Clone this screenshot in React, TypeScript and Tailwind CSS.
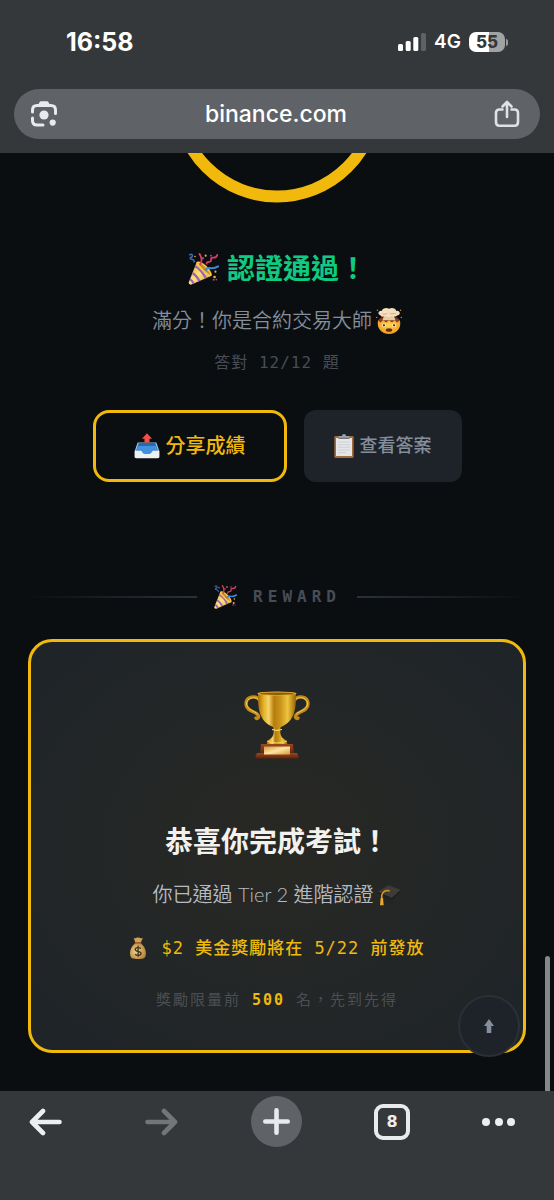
import type { ReactNode } from 'react';

type IconProps = { className?: string };

function PartyPopper({ className }: IconProps) {
  return (
    <svg viewBox="0 0 36 36" className={className} aria-hidden="true">
      <defs>
        <linearGradient id="cone" x1="0" y1="0" x2="1" y2="1">
          <stop offset="0" stopColor="#e0a72e" />
          <stop offset="0.5" stopColor="#ffe27a" />
          <stop offset="1" stopColor="#d99a20" />
        </linearGradient>
        <clipPath id="coneClip">
          <path d="M11 10 C17 11 25 19 27 26 L5 35.5 C3 36 1.500 34.500 2 33 Z" />
        </clipPath>
      </defs>
      <path d="M11 10 C17 11 25 19 27 26 L5 35.500 C3 36 1.500 34.500 2 33 Z" fill="url(#cone)" />
      <g clipPath="url(#coneClip)" stroke="#9a62b8" strokeWidth="2.600" fill="none">
        <path d="M8 14 C14 17 20 24 22 31" />
        <path d="M5 22 C9 24 13 29 15 34" />
        <path d="M2 29 C5 30 7 33 8 36" />
      </g>
      <path d="M11 10 C14 8 20 12 24 17 C28 22 29 26 27 26 C24 27 20 23 16 19 C12 15 10 12 11 10Z" fill="#f4c84e" />
      <path d="M13 11 C16 12 19 14 22 18 C24 20 26 23 26 24.500 C23 23 19 20 17 17 C15 15 13 12.500 13 11Z" fill="#c98a2c" />
      <path d="M15 13 C17 9 17 5 14 1" stroke="#e0395a" strokeWidth="2" fill="none" strokeLinecap="round" />
      <path d="M3 2 C7 0 7 5 4 5 C2 8 9 6 8 10" stroke="#4468bd" strokeWidth="1.700" fill="none" strokeLinecap="round" />
      <path d="M22 12 C22 8 28 12 27 7 C27 3 33 8 34 2" stroke="#d93b6b" strokeWidth="2" fill="none" strokeLinecap="round" />
      <path d="M21 19 C24 14 27 20 35 15" stroke="#3b86d8" strokeWidth="2.300" fill="none" strokeLinecap="round" />
      <g fill="#e8b32f">
        <circle cx="21" cy="3" r="1.200" />
        <circle cx="32" cy="21" r="1.200" />
        <circle cx="31" cy="27" r="1.500" />
        <circle cx="9" cy="4" r="0.900" />
      </g>
      <circle cx="18" cy="6" r="1.200" fill="#c83fa1" />
      <circle cx="30" cy="30" r="1.100" fill="#d83a5e" />
      <circle cx="33" cy="30" r="0.900" fill="#c83fa1" />
      <circle cx="27" cy="3" r="1" fill="#a557c2" />
    </svg>
  );
}

function ExplodingHead({ className }: IconProps) {
  return (
    <svg viewBox="0 0 36 36" className={className} aria-hidden="true">
      <defs>
        <radialGradient id="face" cx="0.500" cy="0.400" r="0.600">
          <stop offset="0" stopColor="#ffd84a" />
          <stop offset="1" stopColor="#f19a20" />
        </radialGradient>
      </defs>
      <path d="M3 17 C8 14 28 14 33 17 C36 28 28 36 18 36 C8 36 0 28 3 17Z" fill="url(#face)" />
      <path d="M3 17 L7 13 H29 L33 17 L29 20 L26 17 L22 20 L18 17 L14 20 L10 17 L6 20Z" fill="#8b3a1c" />
      <path d="M12 8 H24 L27 17 H9Z" fill="#e7c9a4" />
      <path d="M6 10 C1 8 4 3 8 4 C9 0 15 -1 18 1 C22 -1 27 0 28 4 C33 3 35 9 30 10 C27 13 23 11 21 11 C18 14 14 11 12 11 C10 13 7 12 6 10Z" fill="#f5dfbd" />
      <path d="M9 8 C12 10 14 7 16 8 M19 7 C22 10 25 6 28 8" stroke="#c99872" fill="none" />
      <circle cx="11" cy="24" r="2.600" fill="#fff4d8" />
      <circle cx="25" cy="24" r="2.600" fill="#fff4d8" />
      <circle cx="11" cy="24" r="1.600" fill="#4b2a17" />
      <circle cx="25" cy="24" r="1.600" fill="#4b2a17" />
      <ellipse cx="18" cy="30.500" rx="4.500" ry="2.500" fill="#642a18" />
      <g fill="#d48b2c">
        <circle cx="2" cy="3" r="1" />
        <circle cx="34" cy="3" r="1" />
        <circle cx="1" cy="13" r="1" />
        <circle cx="35" cy="13" r="1" />
      </g>
    </svg>
  );
}

function OutboxTray({ className }: IconProps) {
  return (
    <svg viewBox="0 0 36 36" className={className} aria-hidden="true">
      <path d="M5 13 H31 L35 25 V34 H1 V25Z" fill="#9fc2dc" />
      <path d="M6.500 14 H29.500 L33 25 H3Z" fill="#2469b5" />
      <path d="M5 18 H31 L33.500 25 C28 24 26 29 22 29 H14 C10 29 8 24 2.500 25Z" fill="#4391dc" />
      <path d="M1 24.500 H9 C12 24.500 11 29 15 29 H21 C25 29 24 24.500 27 24.500 H35 V33 Q35 35 33 35 H3 Q1 35 1 33Z" fill="#eef1f3" />
      <path d="M18 0.500 L25 8 H21.500 V13 H14.500 V8 H11Z" fill="#ee5149" />
    </svg>
  );
}

function Clipboard({ className }: IconProps) {
  return (
    <svg viewBox="0 0 30 36" className={className} aria-hidden="true">
      <rect x="0.500" y="3" width="29" height="33" rx="2" fill="#a06c3c" />
      <rect x="3" y="6" width="24" height="27" fill="#e6e6e8" />
      <path d="M6 12H24M6 16H24M6 20H24M6 24H24M6 28H18" stroke="#c5c6ca" strokeWidth="1" />
      <path d="M7 7 V4 Q7 3 8 3 H12 Q12 0 15 0 Q18 0 18 3 H22 Q23 3 23 4 V7Z" fill="#9aa3ab" />
      <path d="M7 5.500H23V7.500H7Z" fill="#6e777e" />
    </svg>
  );
}

function Trophy({ className }: IconProps) {
  return (
    <svg viewBox="0 0 66 68" className={className} aria-hidden="true">
      <defs>
        <linearGradient id="cup" x1="0" x2="1" y1="0" y2="0">
          <stop offset="0" stopColor="#a86e08" />
          <stop offset="0.150" stopColor="#e3b228" />
          <stop offset="0.280" stopColor="#f6d468" />
          <stop offset="0.420" stopColor="#b67c0c" />
          <stop offset="0.580" stopColor="#c8921a" />
          <stop offset="0.780" stopColor="#eec43c" />
          <stop offset="1" stopColor="#9a6306" />
        </linearGradient>
        <linearGradient id="base" x1="0" x2="0" y1="0" y2="1">
          <stop offset="0" stopColor="#9a4820" />
          <stop offset="1" stopColor="#5e220c" />
        </linearGradient>
        <linearGradient id="plate" x1="0" x2="1" y1="0" y2="1">
          <stop offset="0" stopColor="#d39a3c" />
          <stop offset="0.500" stopColor="#ffe3a0" />
          <stop offset="1" stopColor="#d39a3c" />
        </linearGradient>
      </defs>
      <g fill="none" strokeLinecap="round">
        <path d="M15.500 9 C12 4 2 5 2 13 C2 21 13 20 14.500 25 C15 27 13 28 12 27" stroke="#c28b17" strokeWidth="3.400" />
        <path d="M50.500 9 C54 4 64 5 64 13 C64 21 53 20 51.500 25 C51 27 53 28 54 27" stroke="#c28b17" strokeWidth="3.400" />
        <path d="M14 8 C10 5 2.500 7 2.500 13 C3 19 11 20 13.500 23" stroke="#f3cf59" strokeWidth="1" />
        <path d="M52 8 C56 5 63.500 7 63.500 13 C63 19 55 20 52.500 23" stroke="#f3cf59" strokeWidth="1" />
      </g>
      <path d="M29 34 H37 C35.500 40 36 46 40 48 Q44 50 43 54 H23 Q22 50 26 48 C30 46 30.500 40 29 34Z" fill="url(#cup)" />
      <path d="M14 2 H52 C52 14 52 29 39 35 Q33 39 27 35 C14 29 14 14 14 2Z" fill="url(#cup)" />
      <ellipse cx="33" cy="2.500" rx="19.500" ry="2" fill="#e7b52e" />
      <ellipse cx="33" cy="2.700" rx="17.500" ry="1.200" fill="#8b5b08" />
      <path d="M28 38.500 Q33 40.500 38 38.500" stroke="#ffe27a" fill="none" />
      <path d="M23 50 Q33 54 43 50" stroke="#f8d865" fill="none" />
      <path d="M17 53 H49 L50 63 H16Z" fill="url(#base)" />
      <path d="M13 62 H53 L54.500 65 V67.500 H11.500 V65Z" fill="url(#base)" />
      <rect x="20" y="55.500" width="26" height="8" fill="url(#plate)" />
    </svg>
  );
}

function GraduationCap({ className }: IconProps) {
  return (
    <svg viewBox="0 0 36 36" className={className} aria-hidden="true">
      <path d="M11 17 L28 22 L24 31 C18 32 13 30 10 27Z" fill="#242424" />
      <path d="M1 15 L17 5 L36 12 L22 24Z" fill="#3f3c38" />
      <path d="M1 15 L22 24 L36 12 V14 L22 26 L1 17Z" fill="#1d1d1e" />
      <path d="M18 13 C10 12 6 17 7 25" stroke="#d9982b" strokeWidth="2.200" fill="none" />
      <path d="M5.500 24 H9 L10 35 H4.500Z" fill="#eba92c" />
      <circle cx="18" cy="13" r="1.500" fill="#b8842a" />
    </svg>
  );
}

function MoneyBag({ className }: IconProps) {
  return (
    <svg viewBox="0 0 28 36" className={className} aria-hidden="true">
      <defs>
        <radialGradient id="bag" cx="0.400" cy="0.500" r="0.650">
          <stop offset="0" stopColor="#f2d791" />
          <stop offset="1" stopColor="#b07d33" />
        </radialGradient>
      </defs>
      <path d="M7 2 C10 3 11 0 14 1 C17 0 18 3 22 2 L18 10 H10Z" fill="#cfa253" />
      <path d="M10 10 H18 C25 15 29 25 26 32 C25 35 22 36 14 36 C6 36 3 35 2 32 C-1 25 3 15 10 10Z" fill="url(#bag)" />
      <path d="M9 9.500 H19" stroke="#8d4e24" strokeWidth="2.200" strokeLinecap="round" />
      <path d="M18.500 19 C17 16.500 9.500 16.500 9.500 20.500 C9.500 25 19 22.500 19 27 C19 31 11 31 9.500 28 M14.200 14.500 V32.500" stroke="#47351c" strokeWidth="2.200" fill="none" />
    </svg>
  );
}

function LensIcon() {
  return (
    <svg width="28" height="28" viewBox="0 0 28 28" fill="none" aria-hidden="true">
      <path d="M2.500 12 V10 Q2.500 5.500 7 5.500 H21 Q25.500 5.500 25.500 10 V13.500 M2.500 18 V20.500 Q2.500 25 7 25 H13" stroke="#e8eaed" strokeWidth="3" strokeLinecap="round" />
      <path d="M8 5 L9.500 2.200 Q10 1.200 11 1.200 H17 Q18 1.200 18.500 2.200 L20 5Z" fill="#e8eaed" />
      <circle cx="14" cy="15" r="4.600" fill="#e8eaed" />
      <circle cx="22.700" cy="22.600" r="3.100" fill="#e8eaed" />
    </svg>
  );
}

function ShareIcon() {
  return (
    <svg width="26" height="28" viewBox="0 0 26 28" fill="none" stroke="#dfe1e4" strokeWidth="2.600" strokeLinecap="round" strokeLinejoin="round" aria-hidden="true">
      <path d="M8.500 9.500 H5.500 Q2 9.500 2 13 V22 Q2 25.800 5.500 25.800 H20.500 Q24 25.800 24 22 V13 Q24 9.500 20.500 9.500 H17.500" />
      <path d="M13 17 V2.500 M8.500 6.500 L13 2 L17.500 6.500" />
    </svg>
  );
}

function ArrowIcon({ className }: IconProps) {
  return (
    <svg width="33" height="28" viewBox="0 0 33 28" fill="none" stroke="currentColor" strokeWidth="4.600" strokeLinecap="round" strokeLinejoin="round" className={className} aria-hidden="true">
      <path d="M30.500 14 H3.500 M14 3 L3 14 L14 25" />
    </svg>
  );
}

function StatusBar() {
  return (
    <div className="flex h-8 items-center justify-between pr-8 pl-[52px]">
      <time className="text-[25px] leading-8 font-bold text-white">16:58</time>
      <div className="flex items-center gap-2">
        <svg width="28" height="18" viewBox="0 0 28 18" role="img" aria-label="Signal">
          <rect x="0" y="11" width="5" height="7" rx="1.500" fill="#fff" />
          <rect x="7.700" y="8" width="5" height="10" rx="1.500" fill="#fff" />
          <rect x="15.300" y="4" width="5" height="14" rx="1.500" fill="#fff" />
          <rect x="23" y="0" width="5" height="18" rx="1.500" fill="#5f6264" />
        </svg>
        <span className="text-[19px] leading-8 font-semibold text-white">4G</span>
        <div className="flex items-center gap-px">
          <div className="flex h-5 w-9 items-center justify-center rounded-[7px] bg-linear-to-r from-white from-55% to-[#a0a2a4] to-55% text-[17px] leading-5 font-extrabold text-[#35383b]">
            55
          </div>
          <div className="h-[7px] w-[2px] rounded-r-full bg-[#96989a]" />
        </div>
      </div>
    </div>
  );
}

function Divider({ children }: { children: ReactNode }) {
  return (
    <div className="flex items-center gap-4 self-stretch">
      <div className="h-[2px] flex-1 bg-linear-to-r from-transparent to-[#2b3139]" />
      {children}
      <div className="h-[2px] flex-1 bg-linear-to-l from-transparent to-[#2b3139]" />
    </div>
  );
}

export default function App() {
  return (
    <div className="flex min-h-screen flex-col bg-[#0b0e11] font-['Inter','Noto_Sans_CJK_TC',sans-serif]">
      <header className="bg-[#35383b] px-[14px] pt-[26px] pb-[14px]">
        <StatusBar />
        <div className="mt-[31px] flex h-[50px] items-center justify-between rounded-full bg-[#5f6367] pr-5 pl-4">
          <button type="button" aria-label="Search with camera">
            <LensIcon />
          </button>
          <a href="https://binance.com" className="text-[23px] leading-8 font-medium text-white">
            binance.com
          </a>
          <button type="button" aria-label="Share page">
            <ShareIcon />
          </button>
        </div>
      </header>

      <main className="relative flex flex-1 flex-col items-center px-7 pb-[37px]">
        <svg width="212" height="50" viewBox="0 162 212 50" role="img" aria-label="12/12">
          <circle cx="106" cy="106" r="99.500" fill="none" stroke="#f0b90b" strokeWidth="12" />
        </svg>

        <h1 className="mt-[46px] flex items-center gap-2 text-[28px] leading-10 font-bold text-[#0ecb81]">
          <PartyPopper className="size-8" />
          認證通過！
        </h1>
        <p className="mt-4 flex items-center gap-1 text-[20px] leading-8 font-[350] text-[#848e9c]">
          滿分！你是合約交易大師
          <ExplodingHead className="size-[26px]" />
        </p>
        <p className="mt-[14px] font-['DejaVu_Sans_Mono','Noto_Sans_CJK_TC',monospace] text-[16px] leading-6 tracking-[1px] text-[#474d57]">
          答對 12/12 題
        </p>

        <div className="mt-[35px] flex gap-[17px]">
          <button type="button" className="flex h-[72px] items-center gap-[6px] rounded-2xl border-3 border-[#f0b90b] px-[38px] text-[20px] leading-8 font-medium text-[#f0b90b]">
            <OutboxTray className="size-[26px]" />
            分享成績
          </button>
          <button type="button" className="flex h-[72px] items-center gap-[6px] rounded-xl bg-[#1e2329] px-[30px] text-[18px] leading-8 font-medium text-[#848e9c]">
            <Clipboard className="h-6 w-5" />
            查看答案
          </button>
        </div>

        <div className="mt-[103px] self-stretch">
          <Divider>
            <PartyPopper className="size-6" />
            <h2 className="font-['DejaVu_Sans_Mono',monospace] text-[16px] leading-6 font-bold tracking-[5px] text-[#474d57]">REWARD</h2>
          </Divider>
        </div>

        <section className="mt-[30px] flex flex-col items-center self-stretch rounded-3xl border-3 border-[#f0b90b] bg-[#1f2428] bg-radial from-[#282822] via-[#242727] via-45% to-[#1f2428] to-90% pt-[49px] pb-[38px]">
          <Trophy className="h-[68px] w-[66px]" />
          <h3 className="mt-[63px] text-[28px] leading-10 font-bold text-[#f2f1ee]">恭喜你完成考試！</h3>
          <p className="mt-[18px] flex items-center gap-1 font-['Lato','Noto_Sans_CJK_TC',sans-serif] text-[20px] leading-7 font-[350] text-[#b7bbc0]">
            你已通過 Tier 2 進階認證
            <GraduationCap className="size-6" />
          </p>
          <p className="mt-7 flex items-center gap-[14px] font-['DejaVu_Sans_Mono','Noto_Sans_CJK_TC',monospace] text-[17px] leading-6 font-medium tracking-[1px] text-[#f0b90b]">
            <MoneyBag className="h-[22px] w-[18px]" />
            $2 美金獎勵將在 5/22 前發放
          </p>
          <p className="mt-7 font-['DejaVu_Sans_Mono','Noto_Sans_CJK_TC',monospace] text-[15px] leading-6 tracking-[2px] text-[#4b4f54]">
            獎勵限量前 <strong className="text-[#f0b90b]">500</strong> 名，先到先得
          </p>
        </section>

        <button
          type="button"
          aria-label="Back to top"
          className="absolute right-[34px] bottom-[34px] flex size-[62px] items-center justify-center rounded-full border-2 border-[#2b3036] bg-[#1e2329]"
        >
          <svg width="12" height="14" viewBox="0 0 12 14" aria-hidden="true">
            <path d="M6 0 L11 7 H8.300 V14 H3.700 V7 H1Z" fill="#848e9c" />
          </svg>
        </button>
        <div className="absolute right-1 bottom-0 h-[135px] w-[5px] rounded-t-full bg-[#85878a]" />
      </main>

      <nav aria-label="Browser" className="flex items-start bg-[#35383b] pt-[5px] pr-[39px] pb-[53px] pl-5">
        <div className="flex-1">
          <button type="button" aria-label="Back" className="flex size-[51px] items-center justify-center text-[#eceef1]">
            <ArrowIcon />
          </button>
        </div>
        <div className="flex-1">
          <button type="button" aria-label="Forward" className="flex size-[51px] items-center justify-center text-[#737577]">
            <ArrowIcon className="rotate-180" />
          </button>
        </div>
        <div className="flex-1">
          <button type="button" aria-label="New tab" className="flex size-[51px] items-center justify-center rounded-full bg-[#5f6367]">
            <svg width="27" height="27" viewBox="0 0 27 27" stroke="#e8eaed" strokeWidth="4.600" strokeLinecap="round" aria-hidden="true">
              <path d="M2.300 13.500 H24.700 M13.500 2.300 V24.700" />
            </svg>
          </button>
        </div>
        <div className="flex-1">
          <button type="button" aria-label="8 open tabs" className="flex size-[51px] items-center justify-center">
            <span className="flex size-9 items-center justify-center rounded-[9px] border-4 border-[#e8eaed] font-['DejaVu_Sans',sans-serif] text-[16px] leading-6 font-bold text-[#eceef1]">
              8
            </span>
          </button>
        </div>
        <button type="button" aria-label="More" className="flex h-[51px] w-[33px] items-center justify-between">
          <span className="size-2 rounded-full bg-[#eceef1]" />
          <span className="size-2 rounded-full bg-[#eceef1]" />
          <span className="size-2 rounded-full bg-[#eceef1]" />
        </button>
      </nav>
    </div>
  );
}
